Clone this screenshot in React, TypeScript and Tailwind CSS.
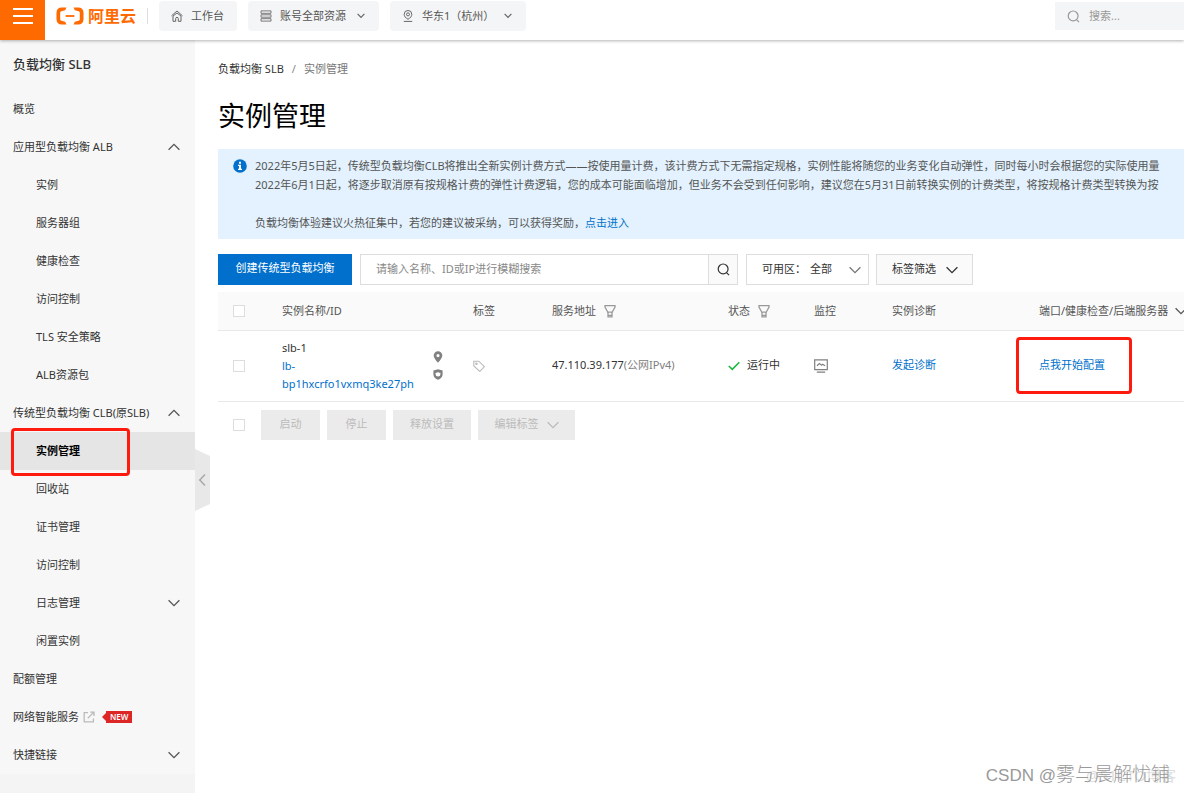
import type { ReactNode } from "react"
import { clsx } from "clsx"

type NavItem = {
  label: string
  child?: boolean
  active?: boolean
  arrow?: "up" | "down"
  external?: boolean
}

const NAV: NavItem[] = [
  { label: "概览" },
  { label: "应用型负载均衡 ALB", arrow: "up" },
  { label: "实例", child: true },
  { label: "服务器组", child: true },
  { label: "健康检查", child: true },
  { label: "访问控制", child: true },
  { label: "TLS 安全策略", child: true },
  { label: "ALB资源包", child: true },
  { label: "传统型负载均衡 CLB(原SLB)", arrow: "up" },
  { label: "实例管理", child: true, active: true },
  { label: "回收站", child: true },
  { label: "证书管理", child: true },
  { label: "访问控制", child: true },
  { label: "日志管理", child: true, arrow: "down" },
  { label: "闲置实例", child: true },
  { label: "配额管理" },
  { label: "网络智能服务", external: true },
  { label: "快捷链接", arrow: "down" },
]

function Chevron({ up, className }: { up?: boolean; className?: string }) {
  return (
    <svg viewBox="0 0 12 8" className={clsx("h-2 w-3 shrink-0", className)} fill="none" stroke="currentColor" strokeWidth="1.3">
      <path d={up ? "M0.6 6.8 6 1.4l5.4 5.4" : "M0.6 1.2 6 6.6l5.4-5.4"} />
    </svg>
  )
}

function SearchIcon({ className }: { className?: string }) {
  return (
    <svg viewBox="0 0 14 14" className={clsx("shrink-0", className)} fill="none" stroke="currentColor" strokeWidth="1.3">
      <circle cx="6.6" cy="6.4" r="5.3" />
      <path d="m10.2 10.3 2.8 2.8" />
    </svg>
  )
}

function FilterIcon() {
  return (
    <svg viewBox="0 0 12 14" className="ml-2 h-[14px] w-3 shrink-0 text-[#999]" fill="none" stroke="currentColor" strokeWidth="1.3">
      <path d="M1 1.600h10v1.400L8.200 8.200H3.800L1 3z" />
      <path d="M4 8v4.800h4V8M4 11.400h4" />
    </svg>
  )
}

function Logo() {
  return (
    <a href="#" className="ml-[11px] flex h-8 items-center gap-1 text-[#ff6a00]">
      <svg viewBox="0 0 28 18" className="h-[18px] w-7" fill="currentColor">
        <path d="M10.4 0.4H5.6A5 5 0 0 0 0.5 5.4v7.2a5 5 0 0 0 5.1 5h4.8L9.2 14.8l-3.8-1a1.6 1.6 0 0 1-1.2-1.5V5.7c0-.8.5-1.4 1.2-1.5l3.8-1z" />
        <path d="M17.6 0.4h4.8a5 5 0 0 1 5.1 5v7.2a5 5 0 0 1-5.1 5h-4.8l1.2-2.8 3.8-1c.7-.1 1.2-.7 1.2-1.5V5.7c0-.8-.5-1.4-1.2-1.5l-3.8-1z" />
        <path d="M9.6 8.1h8.8v1.8H9.6z" />
      </svg>
      <span className="text-[16px] font-bold">阿里云</span>
    </a>
  )
}

function TopButton({ icon, label, arrow, className }: { icon: ReactNode; label: string; arrow?: boolean; className?: string }) {
  return (
    <button className={clsx("flex h-[30px] items-center rounded-sm bg-[#f4f5f6] pl-3 text-[11px] text-[#555]", className)}>
      {icon}
      <span className="ml-2">{label}</span>
      {arrow && (
        <svg viewBox="0 0 8 6" className="mr-[14px] ml-auto h-[6px] w-2" fill="none" stroke="#666" strokeWidth="1.2">
          <path d="M0.6 0.9 4 4.4 7.4 0.9" />
        </svg>
      )}
    </button>
  )
}

function Header() {
  return (
    <header className="relative z-10 flex h-10 items-start bg-white shadow-[0_1px_3px_rgba(0,0,0,0.3)]">
      <button aria-label="菜单" className="flex h-10 w-[45px] shrink-0 justify-center bg-[#ff6a00]">
        <svg viewBox="0 0 20 18" className="mt-[7px] h-[18px] w-5" stroke="#fff" strokeWidth="1.8">
          <path d="M0 2h20M0 9h20M0 16h20" />
        </svg>
      </button>
      <Logo />
      <span className="mt-2 mr-[11px] ml-[11px] h-4 w-px bg-[#ddd]" />
      <div className="flex gap-[11px] pt-px">
        <TopButton
          className="w-[78px]"
          label="工作台"
          icon={
            <svg viewBox="0 0 12 12" className="h-3 w-3" fill="none" stroke="#666" strokeWidth="1">
              <path d="M0.5 5.8 6 1l5.5 4.8" />
              <path d="M2 6v5.3h2.7V8.6a1.3 1.3 0 0 1 2.6 0v2.7H10V6L6 3z" />
            </svg>
          }
        />
        <TopButton
          className="w-[131px]"
          label="账号全部资源"
          arrow
          icon={
            <svg viewBox="0 0 12 12" className="h-3 w-3" fill="none" stroke="#777" strokeWidth="1">
              <path d="M1 .9h10v2.4H1zM1 4.8h10v2.4H1zM1 8.7h10v2.4H1z" />
            </svg>
          }
        />
        <TopButton
          className="w-[136px]"
          label="华东1（杭州）"
          arrow
          icon={
            <svg viewBox="0 0 12 12" className="h-3 w-3" fill="none" stroke="#666" strokeWidth="1">
              <path d="M6 9.3C3.3 7.6 2.2 6.2 2.2 4.3a3.8 3.8 0 0 1 7.6 0C9.8 6.2 8.7 7.6 6 9.3z" />
              <circle cx="6" cy="4.4" r="1.5" />
              <path d="M1.8 11.4h8.4" />
            </svg>
          }
        />
      </div>
      <label className="mt-[2px] ml-auto flex h-7 w-[129px] items-center bg-[#f4f5f6] pl-3 text-[#999]">
        <SearchIcon className="h-[13px] w-[13px]" />
        <input aria-label="搜索" placeholder="搜索..." className="ml-[9px] w-20 bg-transparent text-[11px] outline-none placeholder:text-[#999]" />
      </label>
    </header>
  )
}

function Sidebar() {
  return (
    <aside className="relative w-[195px] shrink-0 bg-[#f4f4f4] text-[#333]">
      <div className="bg-[#f7f7f7]">
        <h2 className="flex h-[50px] items-center pl-[13px] text-[13px] font-medium">负载均衡 SLB</h2>
        <nav>
          {NAV.map((item, i) => (
            <a
              key={i}
              href="#"
              className={clsx(
                "relative flex h-[38px] items-center pr-[15px] text-[11px] whitespace-nowrap",
                item.child ? "pl-9" : "pl-[13px]",
                item.active && "bg-[#e5e5e5] font-bold text-black",
              )}
            >
              {item.label}
              {item.arrow && <Chevron up={item.arrow === "up"} className="ml-auto text-[#555]" />}
              {item.external && (
                <>
                  <svg viewBox="0 0 12 12" className="ml-1 h-3 w-3" fill="none" stroke="#bbb" strokeWidth="1.3">
                    <path d="M5 1.6H1.2v9.2h9.2V7.4M4.8 7.2 10.6 1.4M7.2 1.2h3.8V5" />
                  </svg>
                  <svg viewBox="0 0 4 12" className="ml-[7px] h-3 w-1" fill="#dd2727">
                    <path d="M4 2v8L0 6z" />
                  </svg>
                  <span className="flex h-3 items-center bg-[#dd2727] px-1 text-[8px] font-semibold text-white">NEW</span>
                </>
              )}
              {item.active && (
                <span className="absolute -top-1 left-[11px] h-12 w-[119px] rounded-sm border-3 border-[#ff1a10]" />
              )}
            </a>
          ))}
        </nav>
      </div>
      <button aria-label="收起" className="absolute top-[409px] left-full h-[62px] w-[15px]">
        <svg viewBox="0 0 15 62" className="h-full w-full">
          <path d="M0 0 15 7v48L0 62z" fill="#e8e8e8" />
          <path d="M10 25.5 4.8 31l5.2 5.5" fill="none" stroke="#aaa" strokeWidth="1.6" />
        </svg>
      </button>
    </aside>
  )
}

function Notice() {
  return (
    <div className="flex h-[90px] bg-[#e3f2fe] py-[7px] pl-[15px] text-[11px] leading-[19px] whitespace-nowrap text-[#555]">
      <svg viewBox="0 0 14 14" className="mt-[3px] mr-2 h-[14px] w-[14px] shrink-0">
        <circle cx="7" cy="7" r="6.8" fill="#0070cc" />
        <path d="M6 2.8h2v1.9H6zM5 5.8h3v4h1V11H5V9.8h1V7H5z" fill="#fff" />
      </svg>
      <div>
        <p>2022年5月5日起，传统型负载均衡CLB将推出全新实例计费方式——按使用量计费，该计费方式下无需指定规格，实例性能将随您的业务变化自动弹性，同时每小时会根据您的实际使用量</p>
        <p>2022年6月1日起，将逐步取消原有按规格计费的弹性计费逻辑，您的成本可能面临增加，但业务不会受到任何影响，建议您在5月31日前转换实例的计费类型，将按规格计费类型转换为按</p>
        <p className="mt-[19px]">
          负载均衡体验建议火热征集中，若您的建议被采纳，可以获得奖励，
          <a href="#" className="text-[#0070cc]">点击进入</a>
        </p>
      </div>
    </div>
  )
}

function Toolbar() {
  return (
    <div className="mt-[15px] flex h-[31px] gap-[7px] text-[11px] text-[#333]">
      <button className="mr-px w-[134px] bg-[#0070cc] pb-[3px] text-white">创建传统型负载均衡</button>
      <div className="mr-px flex w-[378px] border border-[#ddd]">
        <input
          aria-label="搜索实例"
          placeholder="请输入名称、ID或IP进行模糊搜索"
          className="min-w-0 flex-1 px-[15px] outline-none placeholder:text-[#888]"
        />
        <button aria-label="搜索" className="flex w-[29px] items-center justify-center border-l border-[#ddd] bg-[#fafafa]">
          <SearchIcon className="h-[13px] w-[13px]" />
        </button>
      </div>
      <label className="relative flex w-[123px] items-center border border-[#ddd] pl-[15px]">
        <span>可用区：</span>
        <select className="ml-1 flex-1 appearance-none bg-transparent outline-none">
          <option>全部</option>
        </select>
        <Chevron className="pointer-events-none absolute right-[7px] text-[#777]" />
      </label>
      <button className="flex w-[97px] items-center gap-[10px] border border-[#ddd] bg-[#fafafa] pl-[15px]">
        标签筛选
        <Chevron />
      </button>
    </div>
  )
}

function Checkbox({ label }: { label: string }) {
  return <input type="checkbox" aria-label={label} className="block h-3 w-3 appearance-none border border-[#ddd] bg-white" />
}

function InstanceTable() {
  return (
    <table className="mt-[7px] w-full table-fixed border-collapse text-left text-[11px] whitespace-nowrap text-[#333] [&_td]:py-0 [&_td]:pr-0 [&_td]:pl-[15px] [&_th]:py-0 [&_th]:pr-0 [&_th]:pl-[15px] [&_th]:font-normal [&_th]:text-[#555]">
      <colgroup>
        <col className="w-[49px]" />
        <col className="w-[191px]" />
        <col className="w-[79px]" />
        <col className="w-[176px]" />
        <col className="w-[86px]" />
        <col className="w-[78px]" />
        <col className="w-[147px]" />
        <col />
      </colgroup>
      <thead>
        <tr className="h-[38px] border-b border-[#e8e8e8] bg-[#fafafa]">
          <th><Checkbox label="全选" /></th>
          <th>实例名称/ID</th>
          <th>标签</th>
          <th><div className="flex items-center">服务地址<FilterIcon /></div></th>
          <th><div className="flex items-center">状态<FilterIcon /></div></th>
          <th>监控</th>
          <th>实例诊断</th>
          <th><div className="flex items-center gap-[7px]">端口/健康检查/后端服务器<Chevron /></div></th>
        </tr>
      </thead>
      <tbody>
        <tr className="h-[71px] border-b border-[#e8e8e8]">
          <td><Checkbox label="选择 slb-1" /></td>
          <td>
            <div className="flex items-center">
              <div className="w-[151px] leading-[18px]">
                slb-1
                <a href="#" className="block text-[#0070cc]">lb-<br />bp1hxcrfo1vxmq3ke27ph</a>
              </div>
              <div className="flex flex-col gap-[6px]">
                <svg viewBox="0 0 10 12" className="h-3 w-[10px]" fill="#808080" fillRule="evenodd">
                  <path d="M5 .3A4.300 4.300 0 0 0 .7 4.600C.7 7.500 5 11.800 5 11.800s4.300-4.300 4.300-7.200A4.300 4.300 0 0 0 5 .3zM5 3a1.600 1.600 0 1 1 0 3.200A1.600 1.600 0 0 1 5 3z" />
                </svg>
                <svg viewBox="0 0 10 11" className="h-[11px] w-[10px]" fill="#808080" fillRule="evenodd">
                  <path d="M5 .2 9.600 1.600v3.800C9.600 8 7.500 9.700 5 10.800 2.500 9.700.4 8 .4 5.400V1.600zM2.600 3.800v1.800a2.400 2 0 0 0 4.800 0V3.800H6L5 2.900l-1 .9z" />
                </svg>
              </div>
            </div>
          </td>
          <td>
            <button aria-label="编辑标签" className="block">
              <svg viewBox="0 0 12 12" className="h-3 w-3" fill="none" stroke="#bbb" strokeWidth="1.1">
                <path d="M.8 1.2h5L11.4 6.6 6.8 11.400.8 6z" />
                <circle cx="3.4" cy="3.7" r=".7" />
              </svg>
            </button>
          </td>
          <td>47.110.39.177<span className="text-[#808080]">(公网IPv4)</span></td>
          <td>
            <div className="flex items-center gap-[7px]">
              <svg viewBox="0 0 12 10" className="h-[10px] w-3" fill="none" stroke="#1eb83f" strokeWidth="1.6">
                <path d="M.8 5 4.3 8.4 11.3 1.2" />
              </svg>
              运行中
            </div>
          </td>
          <td>
            <button aria-label="监控" className="block">
              <svg viewBox="0 0 14 14" className="h-[14px] w-[14px]" fill="none" stroke="#808080" strokeWidth="1.2">
                <path d="M.7.9h12.600v9.800H.7zM2.800 13.200h8.400" />
                <path d="M3 6.800 5.400 4.600 7.600 6.200 8.600 5.200 11 6.800" />
              </svg>
            </button>
          </td>
          <td><a href="#" className="text-[#0070cc]">发起诊断</a></td>
          <td className="relative">
            <a href="#" className="text-[#0070cc]">点我开始配置</a>
            <span className="absolute top-[6px] -left-2 h-[57px] w-[116px] rounded-sm border-3 border-[#ff1a10]" />
          </td>
        </tr>
      </tbody>
    </table>
  )
}

function BatchButton({ children, className }: { children: ReactNode; className?: string }) {
  return (
    <button disabled className={clsx("flex h-[30px] items-center justify-center gap-2 bg-[#ebebeb] text-[11px] text-[#bbb]", className)}>
      {children}
    </button>
  )
}

export default function App() {
  return (
    <div className="relative flex min-h-screen flex-col overflow-hidden bg-white font-['Noto_Sans','Noto_Sans_CJK_SC',sans-serif]">
      <Header />
      <div className="flex flex-1">
        <Sidebar />
        <main className="min-w-0 flex-1 overflow-hidden pt-5 pl-[23px]">
          <div className="flex h-[18px] items-center gap-2 text-[11px] text-[#333]">
            <a href="#">负载均衡 SLB</a>
            <span className="text-[#888]">/</span>
            <span className="text-[#777]">实例管理</span>
          </div>
          <h1 className="mt-5 mb-[15px] text-[27px] leading-9 text-black">实例管理</h1>
          <Notice />
          <Toolbar />
          <InstanceTable />
          <div className="mt-2 flex items-center gap-[7px] pl-[15px]">
            <div className="mr-[9px]"><Checkbox label="全选本页" /></div>
            <BatchButton className="w-[59px]">启动</BatchButton>
            <BatchButton className="w-[59px]">停止</BatchButton>
            <BatchButton className="w-[78px]">释放设置</BatchButton>
            <BatchButton className="w-[97px]">编辑标签<Chevron /></BatchButton>
          </div>
        </main>
      </div>
      {/* Watermarks */}
      <span className="absolute right-2 bottom-[7px] text-[15px] text-[#ddd]">@51CTO博客</span>
      <span className="absolute right-[14px] bottom-1 font-['Liberation_Sans','Noto_Sans_CJK_SC',sans-serif] text-[17px] font-light text-[#999]">
        CSDN @<span className="text-[19px]">雾与晨解忧铺</span>
      </span>
    </div>
  )
}
